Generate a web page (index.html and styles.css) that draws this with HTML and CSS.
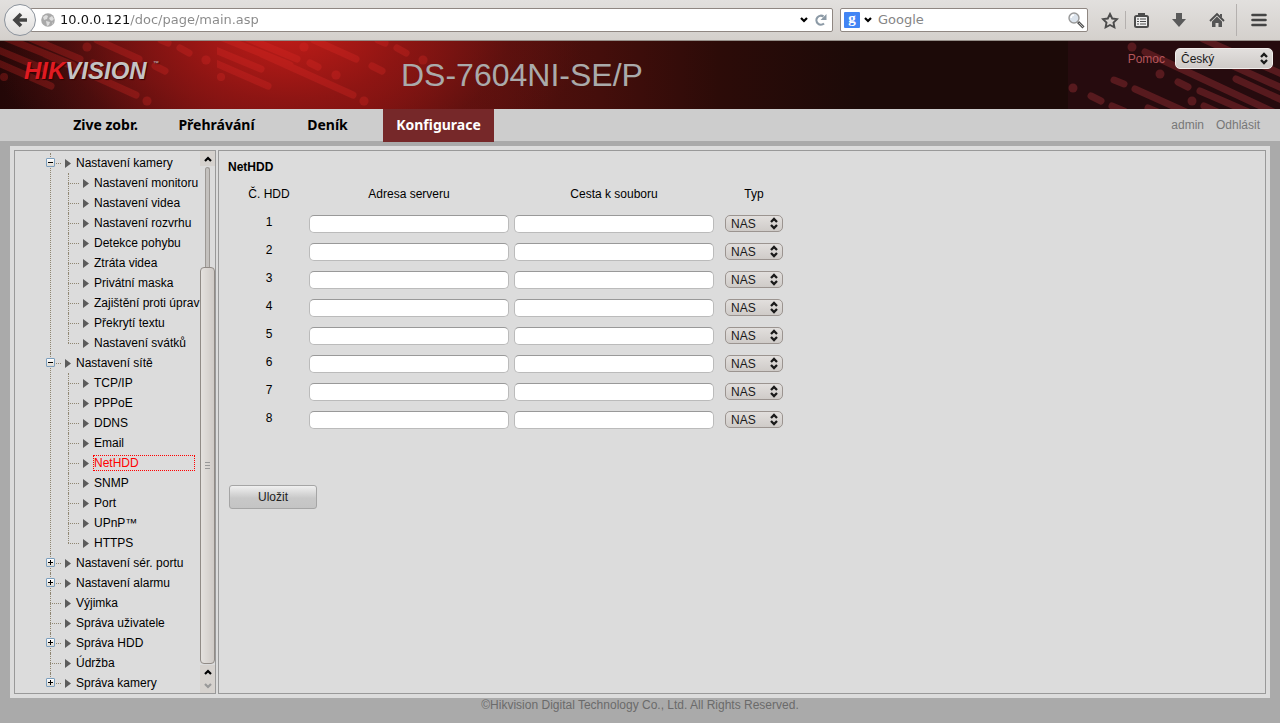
FILE: index.html
```html
<!DOCTYPE html>
<html lang="cs">
<head>
<meta charset="utf-8">
<title>DS-7604NI-SE/P</title>
<link rel="stylesheet" href="styles.css">
</head>
<body>
<svg class="defs" aria-hidden="true">
  <symbol id="updown" viewBox="0 0 8 13"><path d="M1 5 4 2 7 5M1 8 4 11 7 8" fill="none" stroke="#1a1a1a" stroke-width="2.3"/></symbol>
  <symbol id="arrow" viewBox="0 0 6 9"><path d="M0 0 6 4.500 0 9z" fill="#5c5c5c"/></symbol>
  <symbol id="up" viewBox="0 0 8 6"><path d="M1 5 4 2 7 5" fill="none" stroke="currentColor" stroke-width="2.2"/></symbol>
  <symbol id="down" viewBox="0 0 8 6"><path d="M1 1 4 4 7 1" fill="none" stroke="currentColor" stroke-width="2.2"/></symbol>
</svg>

<div class="toolbar">
  <button class="back" aria-label="Back"><svg width="16" height="16" viewBox="0 0 16 16"><path d="M9 2 3 8l6 6M3.500 8H15" fill="none" stroke="#444" stroke-width="3.600"/></svg></button>
  <div class="field url">
    <svg width="14" height="14" viewBox="0 0 14 14"><circle cx="7" cy="7" r="6.800" fill="#a9a9a9"/><path d="M2 4 5 2 7 3 6 6 3 7zM8 5l3-2 2 3-2 2-2-1zM5 8l4 1-1 3-2 1zM11 10l1-1-1 3z" fill="#dedede"/></svg>
    <input class="address" type="text" aria-label="Address" value="10.0.0.121/doc/page/main.asp">
    <svg width="8" height="6"><use href="#down"/></svg>
    <button class="plain" aria-label="Reload"><svg width="12" height="12" viewBox="0 0 12 12"><path d="M9 9.500A4.500 4.500 0 1 1 8.500 2.500" fill="none" stroke="#8c9aa6" stroke-width="2.200"/><path d="M11.500 0v6H5.500z" fill="#8c9aa6"/></svg></button>
  </div>
  <div class="field search">
    <span class="engine">g</span>
    <svg width="8" height="6"><use href="#down"/></svg>
    <input type="text" aria-label="Search" placeholder="Google">
    <svg width="17" height="17" viewBox="0 0 17 17"><path d="M10 10l5.500 5.500" stroke="#555" stroke-width="3"/><path d="M11 11l4 4" stroke="#bbb" stroke-width="1"/><circle cx="6" cy="6" r="5" fill="#dbe3ec" stroke="#999" stroke-width="1.400"/><path d="M3 6a3 3 0 0 1 3-3" fill="none" stroke="#fff" stroke-width="1.500"/></svg>
  </div>
  <button class="tool" aria-label="Bookmark"><svg width="18" height="17" viewBox="0 0 18 17"><path d="M9 2l2.200 4.500 4.800.600-3.500 3.400.900 4.800L9 13l-4.400 2.300.900-4.800L2 7.100l4.800-.600z" fill="none" stroke="#4c4c4c" stroke-width="1.900"/></svg></button>
  <span class="sep short"></span>
  <button class="tool list" aria-label="Bookmarks"><svg width="15" height="16" viewBox="0 0 15 16"><rect x="1" y="4" width="13" height="11" rx="1.500" fill="#eee" stroke="#4c4c4c" stroke-width="2"/><path d="M4 1h7v3H4z" fill="#4c4c4c"/><path d="M3 7h2M6 7h6M3 9.500h2M6 9.500h6M3 12h2M6 12h6" stroke="#4c4c4c" stroke-width="1.200"/></svg></button>
  <button class="tool" aria-label="Downloads"><svg width="16" height="16" viewBox="0 0 16 16"><path d="M5 1h6v6h4L8 15 1 7h4z" fill="#5a5a5a"/></svg></button>
  <button class="tool" aria-label="Home"><svg width="16" height="16" viewBox="0 0 16 16"><path d="M1 9 8 2l7 7" fill="none" stroke="#4c4c4c" stroke-width="1.800"/><path d="M3 9.500 8 4.500l5 5V15H9.500v-4h-3v4H3zM11 2h2v4l-2-2z" fill="#555"/></svg></button>
  <span class="sep"></span>
  <button class="tool menu" aria-label="Menu"><svg width="16" height="14" viewBox="0 0 16 14"><path d="M1.500 2h13M1.500 7h13M1.500 12h13" stroke="#444" stroke-width="2.600" stroke-linecap="round"/></svg></button>
</div>

<header class="banner">
  <svg class="stripes" width="434" height="68" viewBox="0 0 434 68" aria-hidden="true">
    <defs>
      <pattern id="tile" width="217" height="68" patternUnits="userSpaceOnUse">
        <path d="M-4 21 51 45M-4 8 44 28M6-3 73 24M30-3 80 18M45 13 136 54M97-1 139 18M93 22 101 26M155 25 165 30M180 7 189 12M161-1 168 2" fill="none" stroke="#e62a28" stroke-opacity=".26" stroke-width="7" stroke-linecap="round"/>
        <g fill="#e62a28" fill-opacity=".26"><circle cx="87" cy="6" r="4.500"/><circle cx="119" cy="34" r="4.500"/><circle cx="147" cy="60" r="4.500"/><circle cx="206" cy="19" r="4.500"/><circle cx="4" cy="36" r="4"/></g>
      </pattern>
    </defs>
    <rect width="434" height="68" fill="url(#tile)"/>
  </svg>
  <svg class="stripes end" width="212" height="68" viewBox="0 0 212 68" aria-hidden="true">
    <rect width="212" height="68" fill="#260b0e"/>
    <path d="M67 48 127 75M77 11 216 76M132 50 192 76M136 65 156 74M168 38 216 60M150 18 216 48M135-2 216 34M23 55 33 60M46 39 56 43M44 65 56 70M110 41 120 46M80 67 92 72" fill="none" stroke="#571a1e" stroke-width="7" stroke-linecap="round"/>
    <g fill="#571a1e"><circle cx="64" cy="6" r="4.500"/><circle cx="5" cy="47" r="4.500"/><circle cx="92" cy="33" r="4.500"/><circle cx="124" cy="60" r="4.500"/></g>
  </svg>
  <div class="logo"><span>HIK</span>VISION<sup>™</sup></div>
  <h1>DS-7604NI-SE/P</h1>
  <div class="lang">
    <a href="#help">Pomoc</a>
    <span class="select"><select aria-label="Jazyk"><option>Český</option></select><svg width="8" height="13"><use href="#updown"/></svg></span>
  </div>
</header>

<nav class="tabs">
  <a href="#live">Zive zobr.</a>
  <a href="#playback">Přehrávání</a>
  <a href="#log">Deník</a>
  <a href="#config" class="active">Konfigurace</a>
  <div class="user"><a href="#admin">admin</a><a href="#logout">Odhlásit</a></div>
</nav>

<main class="panel">
  <div class="side">
    <ul class="tree">
      <li><button class="box minus" aria-label="Sbalit"></button><div class="row"><svg><use href="#arrow"/></svg><a href="#">Nastavení kamery</a></div>
        <ul>
          <li><div class="row"><svg><use href="#arrow"/></svg><a href="#">Nastavení monitoru</a></div></li>
          <li><div class="row"><svg><use href="#arrow"/></svg><a href="#">Nastavení videa</a></div></li>
          <li><div class="row"><svg><use href="#arrow"/></svg><a href="#">Nastavení rozvrhu</a></div></li>
          <li><div class="row"><svg><use href="#arrow"/></svg><a href="#">Detekce pohybu</a></div></li>
          <li><div class="row"><svg><use href="#arrow"/></svg><a href="#">Ztráta videa</a></div></li>
          <li><div class="row"><svg><use href="#arrow"/></svg><a href="#">Privátní maska</a></div></li>
          <li><div class="row"><svg><use href="#arrow"/></svg><a href="#">Zajištění proti úprav</a></div></li>
          <li><div class="row"><svg><use href="#arrow"/></svg><a href="#">Překrytí textu</a></div></li>
          <li><div class="row"><svg><use href="#arrow"/></svg><a href="#">Nastavení svátků</a></div></li>
        </ul>
      </li>
      <li><button class="box minus" aria-label="Sbalit"></button><div class="row"><svg><use href="#arrow"/></svg><a href="#">Nastavení sítě</a></div>
        <ul>
          <li><div class="row"><svg><use href="#arrow"/></svg><a href="#">TCP/IP</a></div></li>
          <li><div class="row"><svg><use href="#arrow"/></svg><a href="#">PPPoE</a></div></li>
          <li><div class="row"><svg><use href="#arrow"/></svg><a href="#">DDNS</a></div></li>
          <li><div class="row"><svg><use href="#arrow"/></svg><a href="#">Email</a></div></li>
          <li><div class="row"><svg><use href="#arrow"/></svg><a href="#" class="current">NetHDD</a></div></li>
          <li><div class="row"><svg><use href="#arrow"/></svg><a href="#">SNMP</a></div></li>
          <li><div class="row"><svg><use href="#arrow"/></svg><a href="#">Port</a></div></li>
          <li><div class="row"><svg><use href="#arrow"/></svg><a href="#">UPnP™</a></div></li>
          <li><div class="row"><svg><use href="#arrow"/></svg><a href="#">HTTPS</a></div></li>
        </ul>
      </li>
      <li><button class="box plus" aria-label="Rozbalit"></button><div class="row"><svg><use href="#arrow"/></svg><a href="#">Nastavení sér. portu</a></div></li>
      <li><button class="box plus" aria-label="Rozbalit"></button><div class="row"><svg><use href="#arrow"/></svg><a href="#">Nastavení alarmu</a></div></li>
      <li><div class="row"><svg><use href="#arrow"/></svg><a href="#">Výjimka</a></div></li>
      <li><div class="row"><svg><use href="#arrow"/></svg><a href="#">Správa uživatele</a></div></li>
      <li><button class="box plus" aria-label="Rozbalit"></button><div class="row"><svg><use href="#arrow"/></svg><a href="#">Správa HDD</a></div></li>
      <li><div class="row"><svg><use href="#arrow"/></svg><a href="#">Údržba</a></div></li>
      <li><button class="box plus" aria-label="Rozbalit"></button><div class="row"><svg><use href="#arrow"/></svg><a href="#">Správa kamery</a></div></li>
    </ul>
    <div class="scroll" aria-hidden="true">
      <div class="step"><svg width="8" height="6"><use href="#up"/></svg></div>
      <div class="track"></div>
      <div class="thumb"><i></i><i></i><i></i></div>
      <div class="step low"><svg width="8" height="6"><use href="#up"/></svg></div>
      <div class="step low off"><svg width="8" height="6"><use href="#down"/></svg></div>
    </div>
  </div>

  <section class="content">
    <h2>NetHDD</h2>
    <table>
      <thead><tr><th class="num">Č. HDD</th><th class="wide">Adresa serveru</th><th class="wide">Cesta k souboru</th><th class="type">Typ</th></tr></thead>
      <tbody>
        <tr><td class="num">1</td><td><input type="text" aria-label="Adresa serveru 1"></td><td><input type="text" aria-label="Cesta k souboru 1"></td><td class="type"><span class="select"><select aria-label="Typ 1"><option>NAS</option></select><svg width="8" height="13"><use href="#updown"/></svg></span></td></tr>
        <tr><td class="num">2</td><td><input type="text" aria-label="Adresa serveru 2"></td><td><input type="text" aria-label="Cesta k souboru 2"></td><td class="type"><span class="select"><select aria-label="Typ 2"><option>NAS</option></select><svg width="8" height="13"><use href="#updown"/></svg></span></td></tr>
        <tr><td class="num">3</td><td><input type="text" aria-label="Adresa serveru 3"></td><td><input type="text" aria-label="Cesta k souboru 3"></td><td class="type"><span class="select"><select aria-label="Typ 3"><option>NAS</option></select><svg width="8" height="13"><use href="#updown"/></svg></span></td></tr>
        <tr><td class="num">4</td><td><input type="text" aria-label="Adresa serveru 4"></td><td><input type="text" aria-label="Cesta k souboru 4"></td><td class="type"><span class="select"><select aria-label="Typ 4"><option>NAS</option></select><svg width="8" height="13"><use href="#updown"/></svg></span></td></tr>
        <tr><td class="num">5</td><td><input type="text" aria-label="Adresa serveru 5"></td><td><input type="text" aria-label="Cesta k souboru 5"></td><td class="type"><span class="select"><select aria-label="Typ 5"><option>NAS</option></select><svg width="8" height="13"><use href="#updown"/></svg></span></td></tr>
        <tr><td class="num">6</td><td><input type="text" aria-label="Adresa serveru 6"></td><td><input type="text" aria-label="Cesta k souboru 6"></td><td class="type"><span class="select"><select aria-label="Typ 6"><option>NAS</option></select><svg width="8" height="13"><use href="#updown"/></svg></span></td></tr>
        <tr><td class="num">7</td><td><input type="text" aria-label="Adresa serveru 7"></td><td><input type="text" aria-label="Cesta k souboru 7"></td><td class="type"><span class="select"><select aria-label="Typ 7"><option>NAS</option></select><svg width="8" height="13"><use href="#updown"/></svg></span></td></tr>
        <tr><td class="num">8</td><td><input type="text" aria-label="Adresa serveru 8"></td><td><input type="text" aria-label="Cesta k souboru 8"></td><td class="type"><span class="select"><select aria-label="Typ 8"><option>NAS</option></select><svg width="8" height="13"><use href="#updown"/></svg></span></td></tr>
      </tbody>
    </table>
    <button class="save">Uložit</button>
  </section>
</main>
<footer>©Hikvision Digital Technology Co., Ltd. All Rights Reserved.</footer>
</body>
</html>
```
FILE: styles.css
```css
* { box-sizing: border-box; }
body {
  margin: 0;
  min-height: 100vh;
  background: #aaa;
  font: 12px/14px "Liberation Sans", Arial, sans-serif;
  color: #000;
}
button, input, select { font: inherit; color: inherit; margin: 0; }
a { color: inherit; text-decoration: none; }
svg { display: block; flex: none; }
ul { list-style: none; margin: 0; padding: 0; }
.defs { position: absolute; width: 0; height: 0; }

/* Browser toolbar */
.toolbar {
  display: flex;
  align-items: center;
  height: 41px;
  padding: 0 11px 0 4px;
  border-bottom: 1px solid #958e88;
  background: linear-gradient(#e2e0de, #d4d0cc);
  font-family: "DejaVu Sans", sans-serif;
  font-size: 13px;
}
.toolbar button { border: 0; padding: 0; background: none; }
.toolbar .back {
  z-index: 1;
  display: grid;
  place-items: center;
  flex: none;
  width: 32px;
  height: 32px;
  border: 1px solid #8c939c;
  border-radius: 50%;
  background: linear-gradient(#fafafa, #dedcda);
}
.field {
  display: flex;
  align-items: center;
  height: 24px;
  border: 1px solid #8f8782;
  border-radius: 2px;
  background: #fff;
}
.field input { flex: 1; min-width: 0; border: 0; padding: 0; outline: 0; background-color: transparent; }
.url { flex: 1; margin-left: -6px; padding: 0 5px 0 10px; gap: 5px; }
.field .address {
  color: transparent;
  background-image: linear-gradient(90deg, #111 70px, #888 70px);
  background-clip: text;
  -webkit-background-clip: text;
}
.url .plain { margin-left: 2px; }
.search { width: 248px; margin-left: 7px; margin-right: 12px; padding: 0 2px 0 3px; gap: 4px; }
.search input { padding-left: 2px; }
.search input::placeholder { color: #858585; opacity: 1; }
.engine {
  width: 16px;
  height: 16px;
  border-radius: 1px;
  background: #4285f4;
  color: #fff;
  font: bold 15px/13px "Liberation Serif", serif;
  text-align: center;
}
.tool { display: grid; place-items: center; width: 20px; height: 24px; }
.sep { width: 1px; height: 32px; margin: 0 12px 0 9px; background: #b4b0ae; }
.sep.short { height: 18px; margin: 0 5px; }
.tool + .tool { margin-left: 18px; }

/* Banner */
.banner {
  position: relative;
  display: flex;
  align-items: flex-start;
  height: 68px;
  background:
    radial-gradient(ellipse 300px 170px at 285px -10px, #c01c18 0, rgba(150, 22, 20, .8) 40%, rgba(110, 18, 17, .35) 75%, rgba(90, 15, 14, 0) 100%),
    linear-gradient(90deg, #230707 0, #2e0a0a 60px, #681010 220px, #74120f 360px, #5c110e 460px, #440e0b 600px, #2c0b08 720px, #1c0a08 860px);
}
.stripes { position: absolute; left: 0; top: 0; }
.stripes.end { left: auto; right: 0; }
.logo {
  position: relative;
  width: 401px;
  padding: 17px 0 0 24px;
  color: #c4c4c4;
  font-size: 24px;
  line-height: 26px;
  font-weight: bold;
  font-style: italic;
  text-shadow: 1px 1px 1px #300;
}
.logo span { color: #e01b22; }
.logo sup { margin-left: 6px; font-size: 6px; line-height: 6px; font-style: normal; font-weight: normal; vertical-align: 14px; }
h1 { position: relative; flex: 1; margin: 0; padding-top: 16px; font-size: 32px; line-height: 36px; font-weight: normal; color: #aaa; }
.lang { position: relative; display: flex; align-items: center; gap: 10px; padding: 7px 7px 0 0; color: #b4555a; }
.select { display: inline-grid; align-items: center; color: #1a1a1a; }
.select > * { grid-area: 1 / 1; }
.select svg { justify-self: end; margin-right: 5px; pointer-events: none; }
.select select {
  appearance: none;
  width: 58px;
  height: 17px;
  padding: 0 5px;
  border: 1px solid #9b9490;
  border-radius: 5px;
  background: linear-gradient(#e2dfdd, #cfcbc8);
}
.lang .select select { width: 98px; height: 21px; border-color: #f0eeec; }

/* Main tabs */
.tabs { display: flex; height: 32px; padding-left: 50px; background: #cdcdcd; font-size: 14px; font-weight: bold; line-height: 32px; }
.tabs > a { width: 111px; height: 33px; text-align: center; font-family: "Noto Sans", "Open Sans", sans-serif; }
.tabs .active { background: #762829; color: #fff; }
.user { display: flex; gap: 12px; margin-left: auto; padding-right: 20px; font-size: 12px; font-weight: normal; color: #777; }

/* Work area */
.panel { display: flex; gap: 2px; margin: 5px 10px 0; padding: 4px; background: #dcdcdc; }
.side { display: flex; flex: none; width: 202px; border: 1px solid #999; }
.tree { flex: 1; min-width: 0; overflow: hidden; padding: 2px 0 0 35px; white-space: nowrap; }
.tree li { position: relative; }
.tree li::before {
  content: "";
  position: absolute;
  left: 0;
  top: 0;
  bottom: 0;
  border-left: 1px dotted #8f8672;
}
.tree li:last-child::before { bottom: auto; height: 10px; }
.tree ul { margin-left: 18px; }
.row { display: flex; align-items: center; height: 20px; }
.row::before { content: ""; flex: none; width: 11px; margin-right: 4px; border-top: 1px dotted #8f8672; }
.row svg { width: 6px; height: 9px; }
.row a { margin-left: 4px; border: 1px solid transparent; }
.row .current { flex: 1; margin-right: 5px; border: 1px dotted #f00; color: #f00; }
.box {
  position: absolute;
  z-index: 1;
  left: -4px;
  top: 5px;
  width: 9px;
  height: 9px;
  padding: 0;
  border: 1px solid #7b9ebd;
  border-radius: 1px;
  background: linear-gradient(#000, #000) center / 5px 1px no-repeat, linear-gradient(#fff, #dcd8d0);
}
.box.plus { background: linear-gradient(#000, #000) center / 5px 1px no-repeat, linear-gradient(#000, #000) center / 1px 5px no-repeat, linear-gradient(#fff, #dcd8d0); }
.scroll { display: flex; flex-direction: column; align-items: center; flex: none; width: 15px; }
.step { display: grid; place-items: center; width: 15px; height: 15px; background: #d6d2ce; }
.step.low { height: 14px; }
.step.off { color: #999; }
.track { width: 5px; flex: 1; margin-top: 1px; border: 1px solid #9c9894; border-bottom: 0; border-radius: 3px 3px 0 0; background: #c4c1be; }
.thumb {
  display: flex;
  flex-direction: column;
  align-items: center;
  justify-content: center;
  gap: 2px;
  width: 15px;
  flex: 4;
  border: 1px solid #918b86;
  border-radius: 4px;
  background: linear-gradient(90deg, #e4e1de, #cfcac6);
  margin-bottom: 1px;
}
.thumb i { width: 5px; height: 1px; background: #999; }

.content { flex: 1; padding: 9px; border: 1px solid #999; }
h2 { margin: 0 0 13px; font-size: 12px; line-height: 14px; }
table { border-collapse: collapse; table-layout: fixed; width: 560px; margin-left: 1px; }
th { height: 18px; padding: 0 5px 0 0; font-weight: normal; vertical-align: top; }
td { height: 28px; padding: 0 5px 0 0; vertical-align: bottom; }
.num { width: 80px; padding: 0; text-align: center; }
td.num { padding-bottom: 4px; }
.wide { width: 205px; }
.type { width: 70px; padding: 0; text-align: center; }
td.type { padding-bottom: 1px; }
td .select { vertical-align: bottom; }
td input {
  display: block;
  width: 100%;
  height: 18px;
  padding: 0 4px;
  border: 1px solid #bbb;
  border-top-color: #999;
  border-radius: 5px;
  background: #fff;
}
.save {
  display: block;
  width: 88px;
  height: 24px;
  margin: 56px 0 0 1px;
  padding: 0;
  border: 1px solid #a5a5a5;
  border-radius: 3px;
  background: linear-gradient(#f0f0f0, #c8c8c8 55%, #c4c4c4);
  color: #222;
}
footer { text-align: center; color: #6b6b6b; }
```
